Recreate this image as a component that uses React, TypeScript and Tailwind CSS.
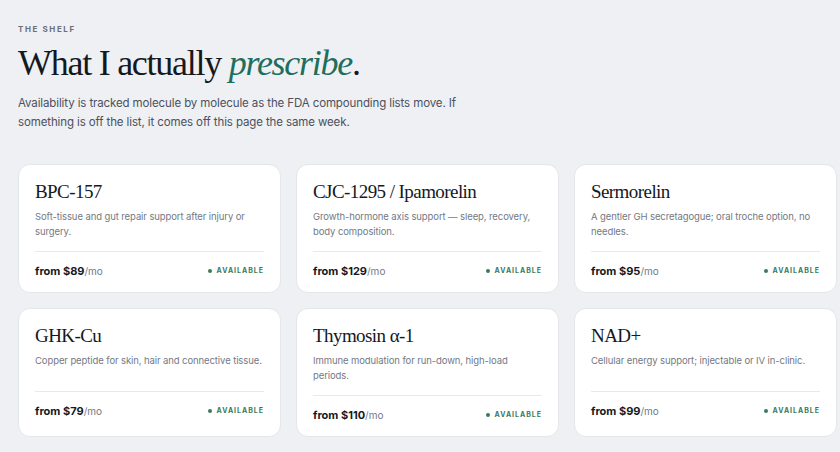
const peptides = [
  {
    name: "BPC-157",
    blurb: "Soft-tissue and gut repair support after injury or surgery.",
    price: 89,
  },
  {
    name: "CJC-1295 / Ipamorelin",
    blurb: "Growth-hormone axis support — sleep, recovery, body composition.",
    price: 129,
  },
  {
    name: "Sermorelin",
    blurb: "A gentler GH secretagogue; oral troche option, no needles.",
    price: 95,
  },
  {
    name: "GHK-Cu",
    blurb: "Copper peptide for skin, hair and connective tissue.",
    price: 79,
  },
  {
    name: "Thymosin α-1",
    blurb: "Immune modulation for run-down, high-load periods.",
    price: 110,
  },
  {
    name: "NAD+",
    blurb: "Cellular energy support; injectable or IV in-clinic.",
    price: 99,
  },
];

const serif = "font-['Liberation_Serif',serif]";

export default function App() {
  return (
    <main className="min-h-screen bg-[#eef0f3] pl-[18px] pr-[3px] pt-[24px] pb-6 font-['Inter',sans-serif] text-[#14181d]">
      <p className="text-[8px] font-bold leading-[10px] tracking-[0.2em] text-[#6b6f76]">
        THE SHELF
      </p>

      <h1 className={`${serif} mt-[9px] text-[36px] leading-[40px] tracking-[-0.035em] text-[#15191e]`}>
        What I actually <em className="text-[#1d6e5f]">prescribe</em>.
      </h1>

      <p className="mt-[11px] max-w-[460px] text-[11.5px] leading-[19px] tracking-[-0.01em] text-[#4b5160]">
        Availability is tracked molecule by molecule as the FDA compounding lists move. If
        something is off the list, it comes off this page the same week.
      </p>

      <div className="mt-[32px] grid grid-cols-3 gap-[15px]">
        {peptides.map((p) => (
          <div
            key={p.name}
            className="rounded-[12px] border border-[#e3e6ea] bg-white px-[16px] pt-[14px] pb-[13px]"
          >
            <h2 className={`${serif} text-[19px] leading-[26px] tracking-[-0.03em] text-[#15191e]`}>
              {p.name}
            </h2>

            <p className="mt-[4px] min-h-[26px] text-[9.5px] leading-[15px] tracking-[-0.01em] text-[#737985]">
              {p.blurb}
            </p>

            <div className="mt-[12px] flex items-center justify-between border-t border-[#e7e9ec] pt-[11px]">
              <p className="text-[11px] font-bold leading-[16px] text-[#15191e]">
                from ${p.price}
                <span className="text-[10px] font-normal text-[#737985]">/mo</span>
              </p>

              <span className="flex items-center gap-[5px] text-[7px] font-bold tracking-[0.14em] text-[#3b7a5a]">
                <span className="h-[4px] w-[4px] rounded-full bg-[#3b7a5a]" />
                AVAILABLE
              </span>
            </div>
          </div>
        ))}
      </div>
    </main>
  );
}
